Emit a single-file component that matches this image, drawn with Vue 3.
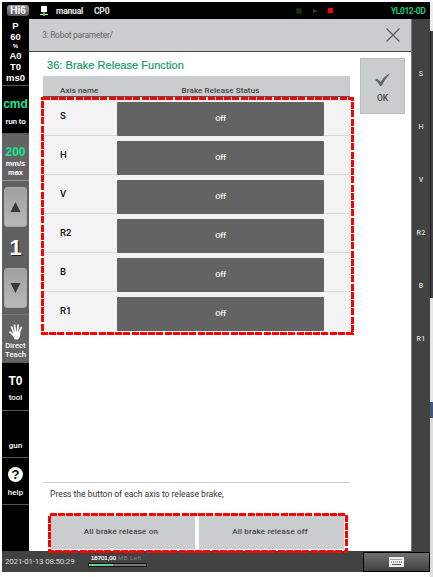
<script setup>
const axes = ['S', 'H', 'V', 'R2', 'B', 'R1']
const status = ['P', '60', '%', 'A0', 'T0', 'ms0']
</script>

<template>
  <div class="page">
    <div class="device">
      <header class="top">
        <span class="logo"><b class="f-logo">Hi6</b></span>
        <svg class="pc" width="8" height="10" viewBox="0 0 8 10"><path d="M1 0h6v6H1z" fill="#fff" /><path d="M3.5 6h1v2h-1zM0 8h8v1H0z" fill="#ddd" /><path d="M3 7h2v3H3z" fill="#2bdc2b" /></svg>
        <b class="mode">manual</b><b class="cp">CP0</b>
        <svg class="lights" width="40" height="8" viewBox="0 0 40 8"><path d="M.5 1.500h5v5h-5z" fill="#173417" stroke="#112211" /><path d="M17 1.500l5 2.500-5 2.500z" fill="#303030" /><path d="M32 1h5v5h-5z" fill="#f00" /></svg>
        <b class="model">YL012-0D</b>
      </header>
      <div class="middle">
        <nav class="side">
          <div class="cell stats"><b v-for="s in status" :key="s" :class="{ pct: s === '%' }">{{ s }}</b></div>
          <div class="cell cmd"><b class="green">cmd</b><b class="sub">run to</b></div>
          <div class="cell speed"><b class="green">200</b><b>mm/s</b><b>max</b></div>
          <div class="cell stepper">
            <button class="arrow"><svg width="11" height="10" viewBox="0 0 11 10"><path d="M5.500 0L10.500 10H.5z" /></svg></button>
            <b class="one">1</b>
            <button class="arrow"><svg width="11" height="10" viewBox="0 0 11 10"><path d="M.5 0h10l-5 10z" /></svg></button>
          </div>
          <div class="cell teach">
            <svg width="14" height="16" viewBox="0 0 14 16" fill="none" stroke="#fff" stroke-linecap="round"><path d="M5 9L2.600 3M6.600 8L5.500 1.200M8.500 8L9 1.200M10 9l2.200-5.500M5 12L1 8" stroke-width="1.700" /><path d="M4.500 8.500L10.800 8l-.3 4.500L9 15H6z" fill="#fff" stroke-width="1" /></svg>
            <b>Direct</b><b>Teach</b>
          </div>
          <div class="cell tool"><b class="big">T0</b><b>tool</b></div>
          <div class="cell gun"><b>gun</b></div>
          <div class="cell help"><span class="q">?</span><b>help</b></div>
          <div class="cell rest"></div>
        </nav>
        <main class="main">
          <div class="crumb"><span>3: Robot parameter/</span>
            <svg width="14" height="14" viewBox="0 0 14 14"><path d="M.5.5l13 13M13.500.5l-13 13" stroke="#555" stroke-width="1.100" /></svg>
          </div>
          <div class="body">
            <div class="content">
              <h1>36: Brake Release Function</h1>
              <div class="thead"><b class="c1">Axis name</b><b class="c2">Brake Release Status</b></div>
              <div class="rows">
                <div v-for="a in axes" :key="a" class="row"><span class="axis">{{ a }}</span><button class="off">Off</button></div>
                <svg class="mark" width="313" height="238"><rect x="1.500" y="1.500" width="310" height="235" /></svg>
              </div>
              <p class="note">Press the button of each axis to release brake,</p>
              <div class="actions">
                <button>All brake release on</button><button>All brake release off</button>
                <svg class="mark" width="301" height="40"><rect x="1.500" y="1.500" width="297" height="37" /></svg>
              </div>
            </div>
            <button class="ok">
              <svg width="16" height="14" viewBox="0 0 16 14"><path d="M0 7l2-1.500L5.500 9Q9 3 15.500 0 10 6 6.500 13H5Q3 9 0 7z" fill="#626467" /></svg>
              <b>OK</b>
            </button>
          </div>
        </main>
        <aside class="right"><b v-for="a in axes" :key="a">{{ a }}</b></aside>
      </div>
      <footer class="bottom">
        <span class="date">2021-01-13 08:50:29</span>
        <div class="mem"><span><b>18701,00</b> MB Left</span><i><em></em></i></div>
        <button class="kbd"><svg width="15" height="10" viewBox="0 0 15 10"><path d="M0 0h15v10H0z" fill="#eee" /><path d="M1.500 2.500h12M2 5h11" stroke="#555" stroke-dasharray="1 1" /><path d="M3 7.500h9" stroke="#555" /></svg></button>
      </footer>
    </div>
    <div class="edge"><i class="e1"></i><i class="e2"></i><i class="e3"></i><i class="e4"></i><i class="e5"></i></div>
  </div>
</template>

<style>
body { background: #fff; overflow: hidden; }
</style>
<style scoped>
* { box-sizing: border-box; }
.page { width: 433px; height: 577px; padding: 2px 0 0 2px; display: flex; font-family: "Liberation Sans", sans-serif; background: #fff; }
.device { width: 428px; height: 570px; display: flex; flex-direction: column; }
button { border: 0; padding: 0; margin: 0; font-family: inherit; }
b, span { white-space: nowrap; }
.top { height: 17px; flex: none; background: #000; color: #eee; display: flex; align-items: center; font: 500 8.500px/16px Roboto, sans-serif; padding-left: 5px; }
.top b { font-weight: 500; }
.logo { width: 22px; height: 11px; border-radius: 3px; background: linear-gradient(#999, #555); display: flex; align-items: center; justify-content: center; }
.top .f-logo { font: bold 10px/10px "Liberation Sans", sans-serif; color: #fff; }
.pc { margin-left: 11px; }
.top .mode { margin-left: 8px; width: 38px; flex: none; font-weight: 700; letter-spacing: -.2px; }
.top .cp { width: 202px; flex: none; font-weight: 700; letter-spacing: -.2px; }
.lights { flex: none; }
.top .model { margin-left: 55px; color: #19e08e; letter-spacing: -.4px; }
.middle { display: flex; height: 532px; flex: none; }
.side { width: 27px; flex: none; color: #fff; font-size: 8px; }
.cell { display: flex; flex-direction: column; align-items: center; background: #000; border-bottom: 1px solid #555; line-height: 9px; }
.stats { height: 67px; font-size: 9.500px; line-height: 11px; padding-top: 1px; }
.stats .pct { font-size: 6px; line-height: 8px; }
.green { color: #19e594; }
.cmd { height: 48px; padding-top: 12px; }
.cmd .green { font-size: 12px; line-height: 13px; }
.cmd .sub { margin-top: 6px; font-size: 7.500px; letter-spacing: -.2px; }
.speed { height: 47px; background: #636363; border-color: #999; padding-top: 11px; }
.speed b { font-size: 7.500px; }
.speed .green { font-size: 12px; line-height: 14px; }
.stepper { height: 134px; background: #606060; border-color: #777; padding-top: 6px; }
.arrow { width: 23px; height: 40px; border-radius: 3px; background: linear-gradient(#a0a0a0, #b8b8b8); display: flex; align-items: center; justify-content: center; fill: #383838; border: 1px solid #aaa; flex: none; }
.one { font-size: 22px; line-height: 41px; text-shadow: 1px 1px 0 #222; }
.teach { height: 48px; background: #636363; padding-top: 9px; }
.teach svg { margin-bottom: 1px; }
.teach b { font: 500 7.700px/9px Roboto, sans-serif; }
.tool { height: 48px; padding-top: 12px; }
.tool b, .gun b, .help b { font: 500 8px/9px Roboto, sans-serif; }
.tool .big { font: bold 12px/12px "Liberation Sans", sans-serif; margin-bottom: 6px; }
.gun { height: 47px; padding-top: 30px; }
.help { height: 47px; padding-top: 9px; }
.q { width: 15px; height: 15px; border-radius: 50%; background: #fff; color: #000; font: bold 13px/15px "Liberation Sans", sans-serif; text-align: center; margin-bottom: 6px; }
.rest { height: 46px; border: 0; }
.main { width: 382px; height: 532px; background: #fff; display: flex; flex-direction: column; }
.crumb { height: 33px; flex: none; background: #cbcccd; border-bottom: 1px solid #444; display: flex; align-items: center; justify-content: space-between; padding: 0 11px 0 13px; font: 8.500px Roboto, sans-serif; letter-spacing: -.27px; color: #666; }
.body { display: flex; }
.content { width: 307px; margin-left: 14px; flex: none; }
h1 { margin: 0; height: 24px; padding: 6px 0 0 4px; font-weight: 400; font-size: 11px; line-height: 14px; color: #149a63; white-space: nowrap; letter-spacing: .04px; -webkit-text-stroke: .2px #149a63; }
.thead { height: 21px; background: #cbcccd; border-bottom: 1px solid #555; display: flex; color: #444; font: 500 8px/9px Roboto, sans-serif; padding-top: 10px; letter-spacing: .1px; }
.thead b { font-weight: 500; }
.c1 { width: 74px; padding-left: 17px; }
.c2 { width: 207px; text-align: center; }
.rows { position: relative; height: 234px; background: #f3f3f3; }
.row { height: 39px; display: flex; border-bottom: 1px solid #d9d9d9; }
.row:last-of-type { border-bottom: 0; }
.axis { width: 74px; padding: 14px 0 0 17px; font: 500 9.500px/10px Roboto, sans-serif; color: #111; }
.off { width: 207px; height: 34px; margin-top: 5px; flex: none; border-radius: 1px; background: #636363; color: #fff; font: 500 7.700px/10px Roboto, sans-serif; padding-bottom: 1px; }
.mark { position: absolute; left: -2px; top: 0; overflow: visible; pointer-events: none; }
.mark rect { fill: none; stroke: #f00; stroke-width: 3; stroke-dasharray: 7 1.250; shape-rendering: crispEdges; }
.note { margin: 151px 0 0; height: 31px; border-top: 1px solid #ccc; padding: 6px 0 0 7px; font: 8.600px/11px Roboto, sans-serif; letter-spacing: -.04px; color: #333; white-space: nowrap; }
.actions { position: relative; display: flex; gap: 4px; margin-left: 7px; padding-top: 3px; height: 38px; }
.actions .mark { left: -2px; }
.actions button { width: 145px; height: 33px; flex: none; background: #cbcccd; color: #444; font: 500 8px/10px Roboto, sans-serif; letter-spacing: .2px; padding: 0 3px 2px 0; }
.ok { width: 45px; height: 56px; margin: 6px 0 0 10px; flex: none; background: #cbcccd; border: 1px solid #bcbcbc; color: #444; display: flex; flex-direction: column; align-items: center; padding-top: 14px; }
.ok b { font: 500 8.500px/8px Roboto, sans-serif; margin-top: 7px; }
.right { width: 19px; height: 532px; background: #424242; border-left: 1px solid #777; color: #ddd; font-size: 7px; line-height: 53px; padding-top: 29px; display: flex; flex-direction: column; align-items: center; }
.right b { height: 53px; font-weight: 500; font-family: Roboto, sans-serif; letter-spacing: .2px; }
.bottom { height: 21px; background: #424242; display: flex; color: #ddd; font-size: 8px; }
.date { width: 86px; padding-left: 3px; font: 8px/21px Roboto, sans-serif; letter-spacing: -.2px; }
.mem { width: 275px; font-size: 6px; line-height: 7px; padding-top: 4px; color: #888; }
.mem b { color: #fff; font-weight: 400; letter-spacing: 0; -webkit-text-stroke: .2px #fff; }
.mem span { display: block; padding-left: 3px; height: 8px; letter-spacing: .4px; }
.mem i { display: block; width: 59px; height: 4px; border: 1px solid #111; background: #777; }
.mem em { display: block; height: 2px; width: 24px; background: #62cf91; }
.kbd { width: 67px; height: 20px; margin-top: 1px; border: 1px solid #000; background: linear-gradient(#707070, #404040); display: flex; align-items: center; justify-content: center; }
.edge { width: 3px; height: 575px; background: #ddd; display: flex; flex-direction: column; }
.edge i { width: 3px; flex: none; }
.e1 { height: 29px; background: #eee; }
.e2 { height: 267px; background: linear-gradient(90deg, #222 1px, #444 1px); }
.e3 { height: 104px; background: #e6e6e6; }
.e4 { height: 16px; background: #40577f; }
.e5 { height: 157px; background: #ddd; }
</style>
